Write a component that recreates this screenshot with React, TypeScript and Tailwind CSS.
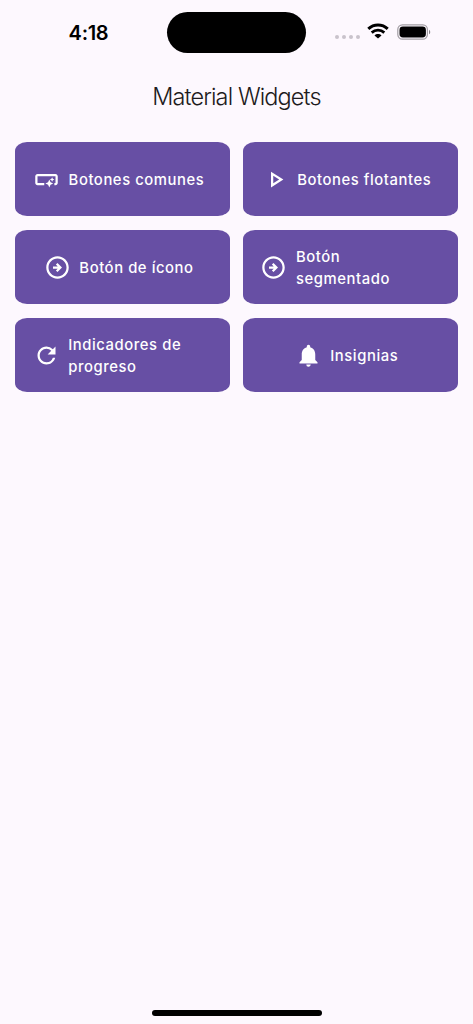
import React from "react";
import {
  MdNotifications,
  MdOutlineArrowCircleRight,
  MdOutlinePlayArrow,
  MdOutlineSmartButton,
  MdRefresh,
} from "react-icons/md";

const iconStyle = "size-[27px] shrink-0";

const widgets = [
  {
    id: "common",
    title: "Botones comunes",
    icon: <MdOutlineSmartButton className={iconStyle} />,
  },
  {
    id: "floating",
    title: "Botones flotantes",
    icon: <MdOutlinePlayArrow className={iconStyle} />,
  },
  {
    id: "icon",
    title: "Botón de ícono",
    icon: <MdOutlineArrowCircleRight className={iconStyle} />,
  },
  {
    id: "segmented",
    title: "Botón segmentado",
    icon: <MdOutlineArrowCircleRight className={iconStyle} />,
  },
  {
    id: "progress",
    title: "Indicadores de progreso",
    icon: <MdRefresh className={iconStyle} />,
  },
  {
    id: "badges",
    title: "Insignias",
    icon: <MdNotifications className={iconStyle} />,
  },
];

function WifiIcon() {
  return (
    <svg width="22" height="16" viewBox="0 0 22 16" fill="none" stroke="#000">
      <path d="M1.3 5.8C6.8.6 15.2.6 20.7 5.8" strokeWidth="3" />
      <path d="M4.7 9.6c3.6-3.3 9-3.3 12.6 0" strokeWidth="2.8" />
      <path d="M11 15.6 7.5 12.4c1.9-1.8 5.1-1.8 7 0z" fill="#000" stroke="none" />
    </svg>
  );
}

function BatteryIcon() {
  return (
    <svg width="34" height="16" viewBox="0 0 34 16" fill="none">
      <rect x="0.8" y="0.8" width="29.6" height="14.4" rx="4.6" stroke="#a19da3" strokeWidth="1.2" />
      <rect x="2.5" y="2.5" width="26.4" height="11" rx="3.4" fill="#000" />
      <path d="M32 5.7c1.7.8 1.7 3.8 0 4.6z" fill="#89858b" />
    </svg>
  );
}

function StatusBar() {
  return (
    <header className="flex h-[65px] w-full shrink-0 items-center">
      <div className="flex w-[167px] justify-center pl-[10px] text-[20px] leading-6 font-semibold tracking-[-0.3px] text-black">
        <span>4:18</span>
      </div>
      <div className="h-[41px] w-[139px] rounded-full bg-black" />
      <div className="flex items-center pl-[29px]">
        <div className="mt-[9px] flex gap-[2.6px]">
          <span className="size-[4.4px] rounded-full bg-[#c9c3cc]" />
          <span className="size-[4.4px] rounded-full bg-[#c9c3cc]" />
          <span className="size-[4.4px] rounded-full bg-[#c9c3cc]" />
          <span className="size-[4.4px] rounded-full bg-[#c9c3cc]" />
        </div>
        <div className="-mt-[4px] ml-[7px]">
          <WifiIcon />
        </div>
        <div className="-mt-[2px] ml-[8px]">
          <BatteryIcon />
        </div>
      </div>
    </header>
  );
}

function App() {
  return (
    <div className="flex h-[1024px] w-[473px] flex-col bg-[#fdf8fe] font-[Inter,sans-serif]">
      <StatusBar />
      <h1 className="flex h-[62px] items-center justify-center pt-px text-[23.5px] font-[350] tracking-[-0.9px] text-[#1d1b20]">
        Material Widgets
      </h1>

      {/* widgets */}
      <main className="grid auto-rows-[74px] grid-cols-2 gap-x-[13px] gap-y-[14px] pt-[15px] pr-[15.5px] pl-[15px]">
        {widgets.map((widget) => (
          <button
            key={widget.id}
            className="flex items-center justify-center gap-[8.6px] rounded-[12px/9px] bg-[#674fa4] pt-px pr-[25px] pl-[17.6px] text-left text-[14.8px] leading-[22px] font-[450] tracking-[0.58px] text-white"
          >
            {widget.icon}
            <span className="pt-px">{widget.title}</span>
          </button>
        ))}
      </main>

      {/* home indicator */}
      <div className="mt-auto mb-[8px] h-[6px] w-[170px] self-center rounded-full bg-black" />
    </div>
  );
}

export default App;
